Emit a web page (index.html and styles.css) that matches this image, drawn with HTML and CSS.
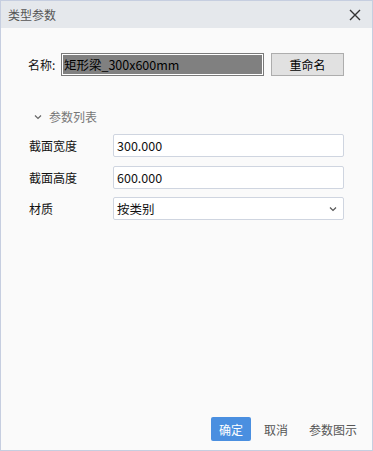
FILE: index.html
```html
<!DOCTYPE html>
<html>
    <head>
        <title>类型参数</title>
        <meta charset="UTF-8">
        <link rel="stylesheet" href="styles.css">
    </head>
    <body>
        <div class="dialog">
            <div class="titleBar">
                <span class="titleText">类型参数</span>
                <svg class="closeIcon" width="12" height="12" viewBox="0 0 12 12">
                    <path d="M1 1 L11 11 M11 1 L1 11" stroke="#333" stroke-width="1.4" fill="none"/>
                </svg>
            </div>

            <div class="content">
                <div class="nameRow">
                    <span class="nameLabel">名称:</span>
                    <div class="nameInput">矩形梁_300x600mm</div>
                    <button class="renameButton">重命名</button>
                </div>

                <div class="groupHeader">
                    <svg class="chevron" width="8" height="6" viewBox="0 0 8 6">
                        <path d="M1 1.5 L4 4.5 L7 1.5" stroke="#666" stroke-width="1.2" fill="none"/>
                    </svg>
                    <span>参数列表</span>
                </div>

                <div class="paramRow">
                    <span class="paramLabel">截面宽度</span>
                    <div class="paramInput">300.000</div>
                </div>
                <div class="paramRow">
                    <span class="paramLabel">截面高度</span>
                    <div class="paramInput">600.000</div>
                </div>
                <div class="paramRow">
                    <span class="paramLabel">材质</span>
                    <div class="paramInput paramSelect">
                        <span>按类别</span>
                        <svg width="8" height="6" viewBox="0 0 8 6">
                            <path d="M1 1.5 L4 4.5 L7 1.5" stroke="#555" stroke-width="1.2" fill="none"/>
                        </svg>
                    </div>
                </div>
            </div>

            <div class="footer">
                <button class="okButton">确定</button>
                <button class="textButton">取消</button>
                <button class="textButton">参数图示</button>
            </div>
        </div>
    </body>
</html>
```

FILE: styles.css
```css
body
{
	margin:0px;
	padding:0px;
	font-family: "Noto Sans CJK SC", "Noto Sans", sans-serif;
	font-size:12px;
	color:#222;
}

.dialog
{
	width:373px;
	height:451px;
	box-sizing:border-box;
	border:1px solid #c6cee0;
	background-color:#fafafa;
	display:flex;
	flex-direction:column;
}

.titleBar
{
	height:27px;
	background-color:#e5e8ec;
	display:flex;
	align-items:center;
	justify-content:space-between;
	padding:0 11px 0 7px;
}

.titleText
{
	color:#555;
	font-size:12px;
}

.content
{
	flex:1;
	padding:25px 28px 0 27px;
}

.nameRow
{
	display:flex;
	align-items:center;
	height:23px;
}

.nameLabel
{
	width:33px;
	color:#111;
}

.nameInput
{
	width:204px;
	height:23px;
	box-sizing:border-box;
	border:1px solid #7a7a7a;
	box-shadow:inset 0 0 0 1px #fff;
	background-color:#808080;
	color:#000;
	font-size:12.5px;
	line-height:21px;
	padding-left:2px;
	white-space:nowrap;
	overflow:hidden;
}

.renameButton
{
	margin-left:7px;
	width:73px;
	height:23px;
	border:1px solid #adadad;
	background-color:#e1e1e1;
	font-family:inherit;
	font-size:12px;
	color:#000;
	padding:0;
}

.groupHeader
{
	display:flex;
	align-items:center;
	margin-top:32px;
	margin-left:6px;
	height:17px;
	color:#777;
	font-size:12px;
}

.chevron
{
	margin-right:7px;
}

.paramRow
{
	display:flex;
	align-items:center;
	margin-top:9px;
	margin-left:1px;
}

.paramRow:last-child
{
	margin-top:8px;
}

.paramLabel
{
	width:84px;
	color:#111;
}

.paramInput
{
	flex:1;
	height:23px;
	box-sizing:border-box;
	border:1px solid #cfd5e0;
	border-radius:2px;
	background-color:#fff;
	padding-left:3px;
	line-height:21px;
	font-size:12.5px;
	color:#111;
}

.paramSelect
{
	display:flex;
	align-items:center;
	justify-content:space-between;
	padding-right:6px;
}

.footer
{
	display:flex;
	justify-content:flex-end;
	align-items:center;
	padding:0 15px 9px 0;
}

.footer button
{
	font-family:inherit;
	font-size:12px;
	height:24px;
	border:none;
	padding:0;
}

.okButton
{
	width:40px;
	background-color:#4a8fe0;
	color:#fff;
	border-radius:2px;
}

.textButton
{
	background:none;
	color:#555;
	margin-left:13px;
}

.textButton + .textButton
{
	margin-left:21px;
}
```
